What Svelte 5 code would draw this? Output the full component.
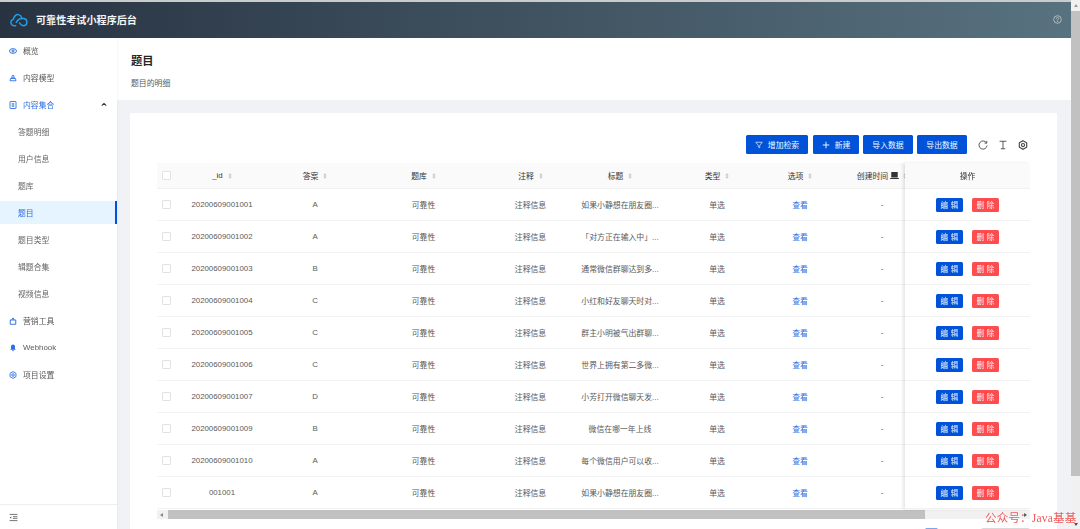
<script>
  const rows = [
    ['20200609001001', 'A', '如果小静想在朋友圈...'],
    ['20200609001002', 'A', '「对方正在输入中」...'],
    ['20200609001003', 'B', '通常微信群聊达到多...'],
    ['20200609001004', 'C', '小红和好友聊天时对...'],
    ['20200609001005', 'C', '群主小明被气出群聊...'],
    ['20200609001006', 'C', '世界上拥有第二多微...'],
    ['20200609001007', 'D', '小芳打开微信聊天发...'],
    ['20200609001009', 'B', '微信在哪一年上线'],
    ['20200609001010', 'A', '每个微信用户可以收...'],
    ['001001', 'A', '如果小静想在朋友圈...']
  ];
  const heads = ['_id', '答案', '题库', '注释', '标题', '类型', '选项'];
  const subs = ['答题明细', '用户信息', '题库', '题目', '题目类型', '辑题合集', '视频信息'];
</script>

{#snippet sorter()}
  <svg class="sort" viewBox="0 0 6 9"><path d="M3 0.5 5.4 3.7H.6zM3 8.5 .6 5.3h4.8z" fill="#bdbdbd"/></svg>
{/snippet}

{#snippet gear(color)}
  <svg class="ic" viewBox="0 0 16 16" fill="none" stroke={color} stroke-width="1.8"><path d="M8 1.2 13.900 4.600v6.800L8 14.800 2.100 11.400V4.600z"/><circle cx="8" cy="8" r="2.500"/></svg>
{/snippet}

<div class="root">
  <div class="page">
    <header class="top">
      <svg class="logo" viewBox="0 0 20 14" fill="none" stroke="#1f9fea" stroke-width="1.500" stroke-linecap="round"><path d="M6 13H4.200a3.400 3.400 0 0 1-.6-6.700C4 3 6.600 .8 9 1.300c1.900.4 3 1.700 3.400 3.400M6.600 9.500C8 7 10.500 5.500 13 5.500h1.600a3.800 3.800 0 0 1 0 7.500c-2.700 0-3.400-1.200-4.600-3"/></svg>
      <span class="brand">可靠性考试小程序后台</span>
      <svg class="help" viewBox="0 0 16 16" fill="none" stroke="#d5dcdf" stroke-width="1.200"><circle cx="8" cy="8" r="6.800"/><path d="M6 6.400a2 2 0 1 1 3 1.700c-.7.4-1 .8-1 1.600"/><circle cx="8" cy="11.600" r=".5"/></svg>
    </header>
    <div class="body">
      <aside class="side">
        <nav class="menu">
          <div class="item">
            <svg class="ic" viewBox="0 0 16 16" fill="none" stroke="#2f6fe4" stroke-width="2"><ellipse cx="8" cy="8" rx="7" ry="4.600"/><circle cx="8" cy="8" r="2"/></svg>概览
          </div>
          <div class="item">
            <svg class="ic" viewBox="0 0 16 16" fill="none" stroke="#2f6fe4" stroke-width="1.800"><path d="M5.500 8 6.500 3h3l1 5zM2 13.500 3 9h10l1 4.500z"/></svg>内容模型
          </div>
          <div class="item open">
            <svg class="ic" viewBox="0 0 16 16" fill="none" stroke="#2f6fe4" stroke-width="1.800"><rect x="2" y="1" width="12" height="14" rx="1"/><path d="M5.500 5.500h5M5.500 8h5M5.500 10.500h5"/></svg>内容集合
            <svg class="chev" viewBox="0 0 8 6" fill="none" stroke="#333" stroke-width="1.400"><path d="M1 4.500 4 1.500l3 3"/></svg>
          </div>
          {#each subs as s}
            <div class="item sub" class:active={s === '题目'}>{s}</div>
          {/each}
          <div class="item">
            <svg class="ic" viewBox="0 0 16 16" fill="none" stroke="#2f6fe4" stroke-width="1.900"><path d="M2.500 6h11v8.500h-11zM5.500 6 8 1.800 10.500 6"/></svg>营销工具
          </div>
          <div class="item">
            <svg class="ic" viewBox="0 0 16 16" fill="#2f6fe4"><path d="M8 1a4 4 0 0 1 4 4v4l1.500 2.500h-11L4 9V5a4 4 0 0 1 4-4zM6 12.500h4a2 2 0 0 1-4 0z"/></svg>Webhook
          </div>
          <div class="item">
            {@render gear('#2f6fe4')}项目设置
          </div>
        </nav>
        <div class="foot">
          <svg class="ic" viewBox="0 0 16 16" fill="none" stroke="#444" stroke-width="1.300"><path d="M1 2.500h14M7 6.500h8M7 9.500h8M1 13.500h14"/><path d="M4 6 1.500 8 4 10z" fill="#444" stroke="none"/></svg>
        </div>
      </aside>
      <main class="main">
        <section class="intro">
          <h1>题目</h1>
          <p>题目的明细</p>
        </section>
        <section class="card">
          <div class="tools">
            <button class="btn wide">
              <svg class="bi" viewBox="0 0 16 16" fill="none" stroke="#fff" stroke-width="1.300"><path d="M1.500 2.500h13L9.500 8.500v5l-3-1.500V8.500z"/></svg>增加检索
            </button>
            <button class="btn new">
              <svg class="bi" viewBox="0 0 16 16" fill="none" stroke="#fff" stroke-width="1.800"><path d="M8 1.500v13M1.500 8h13"/></svg>新建
            </button>
            <button class="btn data">导入数据</button>
            <button class="btn data">导出数据</button>
            <div class="tool-icons">
              <svg class="ti" viewBox="0 0 16 16" fill="none" stroke="#444" stroke-width="1.400"><path d="M13.500 4.500A6.500 6.500 0 1 0 14.500 9"/><path d="M14 1.500v3.500h-3.500"/></svg>
              <svg class="ti" viewBox="0 0 16 16" fill="none" stroke="#444" stroke-width="1.400"><path d="M2.500 2h11M8 2v12M4.500 14h7"/></svg>
              {@render gear('#444')}
            </div>
          </div>
          <div class="table">
            <div class="scroll">
              <div class="row head">
                <div class="cell"><span class="check"></span></div>
                {#each heads as h}
                  <div class="cell"><span class="th">{h}</span>{@render sorter()}</div>
                {/each}
                <div class="cell">
                  <span class="th">创建时间</span>
                  <svg class="laptop" viewBox="0 0 16 13" fill="#333"><path d="M2 0h12v10H2zM0 11h16v2H0z"/></svg>
                  {@render sorter()}
                </div>
              </div>
              {#each rows as r}
                <div class="row">
                  <div class="cell"><span class="check"></span></div>
                  <div class="cell">{r[0]}</div>
                  <div class="cell">{r[1]}</div>
                  <div class="cell">可靠性</div>
                  <div class="cell">注释信息</div>
                  <div class="cell">{r[2]}</div>
                  <div class="cell">单选</div>
                  <div class="cell link">查看</div>
                  <div class="cell">-</div>
                </div>
              {/each}
            </div>
            <div class="fixed">
              <div class="fixed-head">操作</div>
              {#each rows as r}
                <div class="fixed-row">
                  <button class="mini blue">编 辑</button>
                  <button class="mini red">删 除</button>
                </div>
              {/each}
            </div>
          </div>
          <div class="hbar">
            <span class="arrow left"></span>
            <span class="thumb"></span>
            <span class="arrow right"></span>
          </div>
          <div class="pager">
            <span class="pg-on"></span>
            <span class="pg-size"></span>
          </div>
        </section>
      </main>
    </div>
  </div>
  <div class="vbar">
    <span class="varrow up"></span>
    <span class="vthumb"></span>
    <span class="varrow down"></span>
  </div>
  <div class="mark">公众号：Java基基</div>
</div>

<style>
  :global(body) { margin: 0; overflow: hidden; background: #fff; }
  * { box-sizing: border-box; }
  .root {
    position: relative;
    display: flex;
    width: 1080px;
    height: 529px;
    overflow: hidden;
    font-family: "Liberation Sans", "Noto Sans CJK SC", sans-serif;
    font-size: 7.875px;
    color: #595959;
    filter: blur(0.3px);
  }
  .page { flex: 1; display: flex; flex-direction: column; min-width: 0; }
  .top {
    flex: none;
    height: 38px;
    border-top: 2px solid #c9cbcd;
    display: flex;
    align-items: center;
    padding: 0 9px 1px 10px;
    background: linear-gradient(90deg, #283342, #58727f);
  }
  .logo { width: 19px; height: 14px; }
  .brand { margin-left: 7px; font-size: 10.100px; font-weight: 700; color: #f4f5f6; }
  .help { width: 9px; height: 9px; margin-left: auto; }
  .body { flex: 1; display: flex; min-height: 0; }
  .side {
    flex: none;
    width: 117px;
    display: flex;
    flex-direction: column;
    background: #fff;
    box-shadow: 1px 0 2px rgba(0, 0, 0, 0.04);
    z-index: 1;
  }
  .menu { flex: 1; padding-top: 1px; }
  .item {
    height: 23px;
    margin-bottom: 4px;
    display: flex;
    align-items: center;
    padding-left: 9px;
    gap: 6px;
  }
  .item.open { color: #2f6fe4; }
  .chev { width: 6px; height: 5px; margin-left: auto; margin-right: 10px; }
  .item.sub { padding-left: 18px; color: #666; }
  .item.active { background: #e6f4ff; color: #2f6fe4; border-right: 2px solid #0052d9; }
  .ic { width: 8px; height: 8px; flex: none; }
  .foot { height: 25px; border-top: 1px solid #eee; display: flex; align-items: center; padding-left: 9px; }
  .foot .ic { width: 9px; height: 9px; }
  .main { flex: 1; min-width: 0; background: #f0f2f5; }
  .intro { height: 62px; background: #fff; padding: 15px 14px 0; }
  h1 { margin: 0; font-size: 11.250px; line-height: 16px; font-weight: 700; color: #262626; }
  p { margin: 9px 0 0; line-height: 11px; color: #595959; }
  .card { margin: 13px 14px 0 13px; height: 440px; background: #fff; padding: 22px 27px 0; border-radius: 1px; }
  .tools { display: flex; align-items: center; gap: 4px; height: 19px; margin-bottom: 9px; justify-content: flex-end; padding-right: 2px; }
  .btn {
    height: 19px;
    border: 0;
    border-radius: 1.500px;
    background: #0052d9;
    color: #f2f6fd;
    font: inherit;
    font-size: 7.875px;
    display: flex;
    align-items: center;
    justify-content: center;
    gap: 5px;
    padding: 0;
  }
  .wide { width: 62px; margin-right: 1px; }
  .new { width: 46px; }
  .data { width: 50px; }
  .bi { width: 8px; height: 8px; }
  .tool-icons { display: flex; align-items: center; gap: 10px; margin-left: 7px; }
  .ti, .tool-icons .ic { width: 10px; height: 10px; }
  .table { display: flex; width: 873px; }
  .scroll { flex: 1; min-width: 0; overflow: hidden; }
  .row {
    display: grid;
    grid-template-columns: 19px 92px 94px 123px 91px 88px 106px 60px 104px;
    height: 32px;
    border-bottom: 1px solid #f2f2f2;
    width: 777px;
  }
  .row.head { height: 26px; background: #fafafa; color: #333; border-bottom: 1px solid #f0f0f0; }
  .cell { display: flex; align-items: center; justify-content: center; white-space: nowrap; min-width: 0; }
  .th { margin-right: 5px; }
  .sort { width: 4px; height: 6px; flex: none; }
  .laptop { width: 9px; height: 7px; margin-right: 4px; margin-left: -3px; flex: none; }
  .check { width: 9px; height: 9px; border: 1px solid #e2e2e2; border-radius: 1px; background: #fff; flex: none; }
  .link { color: #2f6fe4; }
  .fixed { flex: none; width: 125px; background: #fff; box-shadow: -2px 0 3px rgba(0, 0, 0, 0.1); z-index: 1; }
  .fixed-head { height: 26px; background: #fafafa; color: #333; border-bottom: 1px solid #f0f0f0; display: flex; align-items: center; justify-content: center; }
  .fixed-row { height: 32px; border-bottom: 1px solid #f2f2f2; display: flex; align-items: center; justify-content: center; gap: 9px; }
  .mini {
    width: 27px;
    height: 14px;
    border: 0;
    padding: 0;
    border-radius: 1.500px;
    color: #f2f6fd;
    font: inherit;
    font-size: 7.500px;
    letter-spacing: 0.3px;
  }
  .blue { background: #0052d9; }
  .red { background: #ff4d4f; }
  .hbar { height: 9px; width: 873px; background: #f1f1f1; display: flex; align-items: center; padding: 0 3px; margin-top: 1px; }
  .thumb { width: 757px; height: 9px; background: #c1c1c1; margin-left: 5px; }
  .arrow { width: 0; height: 0; border-top: 2.500px solid transparent; border-bottom: 2.500px solid transparent; }
  .arrow.left { border-right: 3px solid #888; }
  .arrow.right { border-left: 3px solid #505050; margin-left: auto; }
  .pager { display: flex; margin-top: 9px; padding-left: 768px; gap: 43px; }
  .pg-on { width: 13px; height: 18px; border-radius: 1.500px; background: #7ea6ea; }
  .pg-size { width: 50px; height: 18px; border: 1px solid #d9d9d9; border-radius: 1.500px; }
  .vbar { flex: none; width: 9px; background: #f1f1f1; display: flex; flex-direction: column; align-items: center; padding-top: 4px; }
  .varrow { width: 0; height: 0; border-left: 2.500px solid transparent; border-right: 2.500px solid transparent; }
  .varrow.up { border-bottom: 3px solid #9a9a9a; }
  .vthumb { width: 9px; height: 465px; margin-top: 4px; background: #c1c1c1; }
  .varrow.down { border-top: 3px solid #505050; margin-top: auto; margin-bottom: 3px; }
  .mark {
    position: absolute;
    left: 985px;
    top: 511px;
    font-family: "Liberation Serif", "Noto Sans CJK SC", serif;
    font-size: 11.500px;
    line-height: 14px;
    color: #ee5a5a;
    letter-spacing: 0.2px;
    text-shadow: 0 0 2px #fff;
    white-space: nowrap;
  }
</style>
